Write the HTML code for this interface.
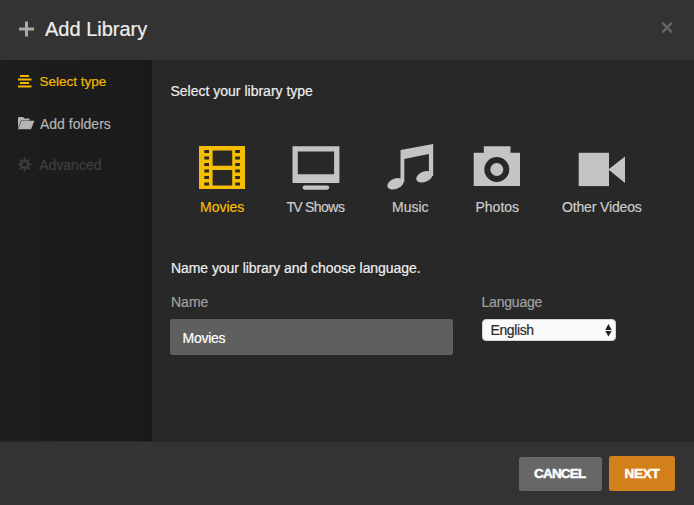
<!DOCTYPE html>
<html><head><meta charset="utf-8">
<style>
html,body{margin:0;padding:0;width:694px;height:505px;overflow:hidden;background:#282828;}
*{box-sizing:border-box;}
body{font-family:"Liberation Sans",sans-serif;position:relative;-webkit-text-stroke:0.2px currentColor;}
.abs{position:absolute;white-space:nowrap;}
#hdr{position:absolute;left:0;top:0;width:694px;height:60px;background:#333333;}
#side{position:absolute;left:0;top:60px;width:152px;height:381px;background:linear-gradient(to right,#1e1e1e 0,#1c1c1c 40px,#1b1b1b 136px,#181818 152px);}
#main{position:absolute;left:152px;top:60px;width:542px;height:381px;background:#282828;}
#ftr{position:absolute;left:0;top:441px;width:694px;height:64px;background:#333333;border-top:1px solid #262626;}
.t14{font-size:14px;line-height:16px;}
#title{left:45px;top:18px;font-size:20px;line-height:23px;color:#eeeeee;}
.lbl{color:#cccccc;}
#btnc{left:519px;top:456.5px;width:82.5px;height:34.2px;-webkit-text-stroke:0.45px #fff;background:#676767;border-radius:2.5px;color:#fff;font-weight:bold;font-size:13.5px;text-align:center;line-height:34.2px;letter-spacing:-0.8px;text-indent:-1px;}
#btnn{left:608.8px;top:456.3px;width:66.4px;height:34.4px;-webkit-text-stroke:0.45px #fff;background:#d4801a;border-radius:2.5px;color:#fff;font-weight:bold;font-size:13.5px;text-align:center;line-height:35.2px;letter-spacing:-0.3px;}
#inp{left:169.5px;top:318.5px;width:283.5px;height:36px;background:#5f5f5f;border-radius:2.5px;}
#sel{left:482px;top:319px;width:134px;height:22px;background:#fafafa;border-radius:4px;border:1px solid #d4d4d4;}
</style></head>
<body>
<div id="hdr"></div>
<div id="side"></div>
<div id="main"></div>
<div id="ftr"></div>

<!-- header -->
<svg class="abs" style="left:0;top:0" width="694" height="60">
  <rect x="19" y="27.5" width="15" height="3" fill="#aaaaaa"/>
  <rect x="25" y="21.5" width="3" height="15" fill="#aaaaaa"/>
  <path d="M663 23.4 L671.2 31.6 M671.2 23.4 L663 31.6" stroke="#646464" stroke-width="2.5" stroke-linecap="round"/>
</svg>
<div id="title" class="abs">Add Library</div>

<!-- sidebar -->
<svg class="abs" style="left:0;top:60px" width="151" height="130">
  <g fill="#f0b800">
    <rect x="20" y="15" width="9" height="2"/>
    <rect x="18" y="18.5" width="13.5" height="2"/>
    <rect x="20" y="22" width="9" height="2"/>
    <rect x="18" y="25.5" width="13.5" height="2"/>
  </g>
  <g fill="#b4b4b4">
    <path d="M18 58 Q18 57 19 57 L23 57 L24.5 58.5 L29.5 58.5 L29.5 60.5 L21 60.5 L18 68 Z"/>
    <path d="M21.5 60.8 L34.4 60.8 L31 69.3 L18 69.3 Z"/>
  </g>
  <g fill="#3a3a3a" transform="translate(24.6 104.4)">
    <path fill-rule="evenodd" d="M-1.05 -4.68 L-0.93 -7.14 L0.93 -7.14 L1.05 -4.68 L2.57 -4.05 L4.39 -5.71 L5.71 -4.39 L4.05 -2.57 L4.68 -1.05 L7.14 -0.93 L7.14 0.93 L4.68 1.05 L4.05 2.57 L5.71 4.39 L4.39 5.71 L2.57 4.05 L1.05 4.68 L0.93 7.14 L-0.93 7.14 L-1.05 4.68 L-2.57 4.05 L-4.39 5.71 L-5.71 4.39 L-4.05 2.57 L-4.68 1.05 L-7.14 0.93 L-7.14 -0.93 L-4.68 -1.05 L-4.05 -2.57 L-5.71 -4.39 L-4.39 -5.71 L-2.57 -4.05 Z M2.2 0 A2.2 2.2 0 1 0 -2.2 0 A2.2 2.2 0 1 0 2.2 0 Z"/>
  </g>
</svg>
<div id="s1" class="abs t14" style="left:39.5px;top:74px;color:#f0b800;font-size:13.5px">Select type</div>
<div id="s2" class="abs t14" style="left:40px;top:115.5px;color:#b4b4b4">Add folders</div>
<div id="s3" class="abs t14" style="left:39.2px;top:157px;color:#404040">Advanced</div>

<!-- main -->
<div id="m1" class="abs t14" style="left:170.5px;top:82.8px;color:#eeeeee">Select your library type</div>

<svg class="abs" style="left:151px;top:60px" width="543" height="150">
  <g transform="translate(-151 -60)">
    <!-- film -->
    <g fill="#f5bf00">
      <path fill-rule="evenodd" d="M199 146 H245 V189 H199 Z
        M212.6 150.5 H232.2 V165.7 H212.6 Z
        M212.6 170.1 H232.2 V185.5 H212.6 Z
        M204.3 150 h4.7 v3 h-4.7 Z M204.3 156.5 h4.7 v3 h-4.7 Z M204.3 163 h4.7 v3 h-4.7 Z
        M204.3 169.5 h4.7 v3 h-4.7 Z M204.3 176 h4.7 v3 h-4.7 Z M204.3 182.5 h4.7 v3 h-4.7 Z
        M235.2 150 h4.7 v3 h-4.7 Z M235.2 156.5 h4.7 v3 h-4.7 Z M235.2 163 h4.7 v3 h-4.7 Z
        M235.2 169.5 h4.7 v3 h-4.7 Z M235.2 176 h4.7 v3 h-4.7 Z M235.2 182.5 h4.7 v3 h-4.7 Z"/>
    </g>
    <g fill="#c4c4c4">
      <!-- tv -->
      <path fill-rule="evenodd" d="M292.5 146.3 H339.4 V183.1 H292.5 Z M297.8 151.6 H334.1 V174.2 H297.8 Z"/>
      <rect x="302.6" y="185.5" width="26.7" height="4.2" rx="2.1"/>
      <!-- music -->
      <path d="M400.5 150 L433.2 143.9 L433.2 176 L428.9 176 L428.9 154 L404.3 158.9 L404.3 182 L400.5 182 Z"/>
      <ellipse cx="395.4" cy="183.8" rx="8.5" ry="5.2" transform="rotate(-22 395.4 183.8)"/>
      <ellipse cx="424.3" cy="176.8" rx="8.5" ry="5.2" transform="rotate(-22 424.3 176.8)"/>
      <!-- camera -->
      <path fill-rule="evenodd" d="M473.7 152.8 H483.8 V146.3 H510.5 V152.8 H520 V186.1 H473.7 Z
        M484.3 169.5 a12.5 12.5 0 1 0 25 0 a12.5 12.5 0 1 0 -25 0 Z"/>
      <circle cx="496.8" cy="169.5" r="6.5"/>
      <!-- video -->
      <rect x="578.7" y="152.8" width="30.3" height="33.3"/>
      <path d="M608.4 169.5 L625 156.4 L625 183.1 Z"/>
    </g>
  </g>
</svg>

<div id="l1" class="abs t14" style="left:200px;top:199px;color:#f5bf00">Movies</div>
<div id="l2" class="abs t14" style="left:286.5px;top:199px;color:#cccccc;letter-spacing:-0.3px;word-spacing:-1px"><span style="letter-spacing:-1.8px">T</span>V <span style="letter-spacing:-0.5px">Shows</span></div>
<div id="l3" class="abs t14" style="left:392px;top:199px;color:#cccccc">Music</div>
<div id="l4" class="abs t14" style="left:475.5px;top:199px;color:#cccccc">Photos</div>
<div id="l5" class="abs t14" style="left:562px;top:199px;color:#cccccc;letter-spacing:-0.15px">Other Videos</div>

<div id="m2" class="abs t14" style="left:171px;top:260px;color:#eeeeee;letter-spacing:-0.07px">Name your library and choose language.</div>
<div id="n1" class="abs t14" style="left:171px;top:294px;color:#a0a0a0">Name</div>
<div id="n2" class="abs t14" style="left:481.5px;top:294px;color:#a0a0a0;letter-spacing:-0.2px">Language</div>
<div id="inp" class="abs"></div>
<div id="v1" class="abs t14" style="left:182.5px;top:330px;color:#ffffff;letter-spacing:-0.25px">Movies</div>
<div id="sel" class="abs"></div>
<div id="v2" class="abs t14" style="left:490.5px;top:322px;color:#2b2b2b;letter-spacing:-0.4px">English</div>
<svg class="abs" style="left:600px;top:320px" width="16" height="20">
  <path d="M5.2 10 L8.45 4 L11.7 10 Z M5.2 11 L8.45 16.5 L11.7 11 Z" fill="#222"/>
</svg>

<!-- footer -->
<div id="btnc" class="abs">CANCEL</div>
<div id="btnn" class="abs">NEXT</div>
</body></html>
